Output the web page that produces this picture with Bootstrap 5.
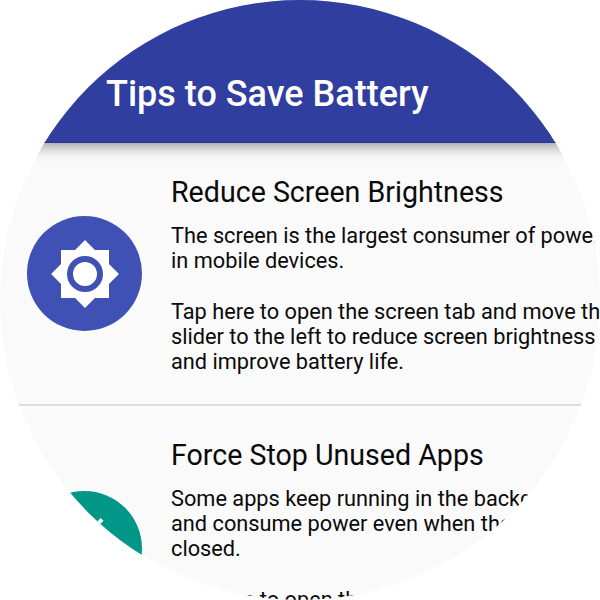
<!DOCTYPE html>
<html lang="en">
<head>
<meta charset="utf-8">
<meta name="viewport" content="width=device-width, initial-scale=1">
<title>Tips to Save Battery</title>
<link href="https://cdn.jsdelivr.net/npm/bootstrap@5.3.0/dist/css/bootstrap.min.css" rel="stylesheet">
<style>
body { font-family: Roboto, sans-serif; color: #0a0a0a; background: #fff; }
.screen { width: 600px; height: 600px; clip-path: circle(300px at 300px 300px); background: #fafafa; }
.app-bar { height: 143px; background: #303e9f; border-bottom: 1px solid #2b3794; padding: 70px 0 0 106px; box-shadow: 0 3px 14px rgba(0,0,0,.42); z-index: 1; }
.app-title { font-size: 36px; font-weight: 500; line-height: 48px; }
.tip { height: 263px; border-bottom: 2px solid #dedede; padding-left: 27px; }
.tip-tall { height: 285px; border: 0; }
.tip-icon { width: 115px; height: 115px; margin-right: 29px; background: #3f51b5; }
.tip-icon-teal { background: #009688; }
.tip-text { padding-top: 32px; }
.tip-title { font-size: 28.6px; line-height: 34px; margin-bottom: 14px; font-weight: 400; }
.tip-body { font-size: 21.75px; line-height: 25.2px; }
</style>
</head>
<body class="overflow-hidden">
<main class="screen overflow-hidden">
  <header class="app-bar position-relative text-white">
    <h1 class="app-title m-0 text-nowrap">Tips to Save Battery</h1>
  </header>
  <section class="tip d-flex align-items-center">
    <div class="tip-icon rounded-circle d-flex align-items-center justify-content-center flex-shrink-0">
      <svg width="72" height="72" viewBox="0 0 24 24" fill="#fff" aria-hidden="true"><path d="M20 8.69V4h-4.69L12 .69 8.69 4H4v4.69L.69 12 4 15.31V20h4.69L12 23.31 15.31 20H20v-4.69L23.31 12z"/><circle cx="12" cy="12" r="5" fill="none" stroke="#3f51b5" stroke-width="2"/></svg>
    </div>
    <div class="tip-text align-self-start text-nowrap">
      <h2 class="tip-title">Reduce Screen Brightness</h2>
      <p class="tip-body m-0">The screen is the largest consumer of power<br>in mobile devices.<br><br>Tap here to open the screen tab and move the<br>slider to the left to reduce screen brightness<br>and improve battery life.</p>
    </div>
  </section>
  <section class="tip tip-tall d-flex align-items-center">
    <div class="tip-icon tip-icon-teal rounded-circle d-flex align-items-center justify-content-center flex-shrink-0">
      <svg width="72" height="72" viewBox="0 0 24 24" fill="none" stroke="#fff" stroke-width="1.3" aria-hidden="true"><path d="M17.7 2.1L6.5 13.3"/></svg>
    </div>
    <div class="tip-text align-self-start text-nowrap">
      <h2 class="tip-title">Force Stop Unused Apps</h2>
      <p class="tip-body m-0">Some apps keep running in the background<br>and consume power even when they are<br>closed.<br><br>Tap here to open the apps tab</p>
    </div>
  </section>
</main>
<script src="https://cdn.jsdelivr.net/npm/bootstrap@5.3.0/dist/js/bootstrap.bundle.min.js"></script>
</body>
</html>
